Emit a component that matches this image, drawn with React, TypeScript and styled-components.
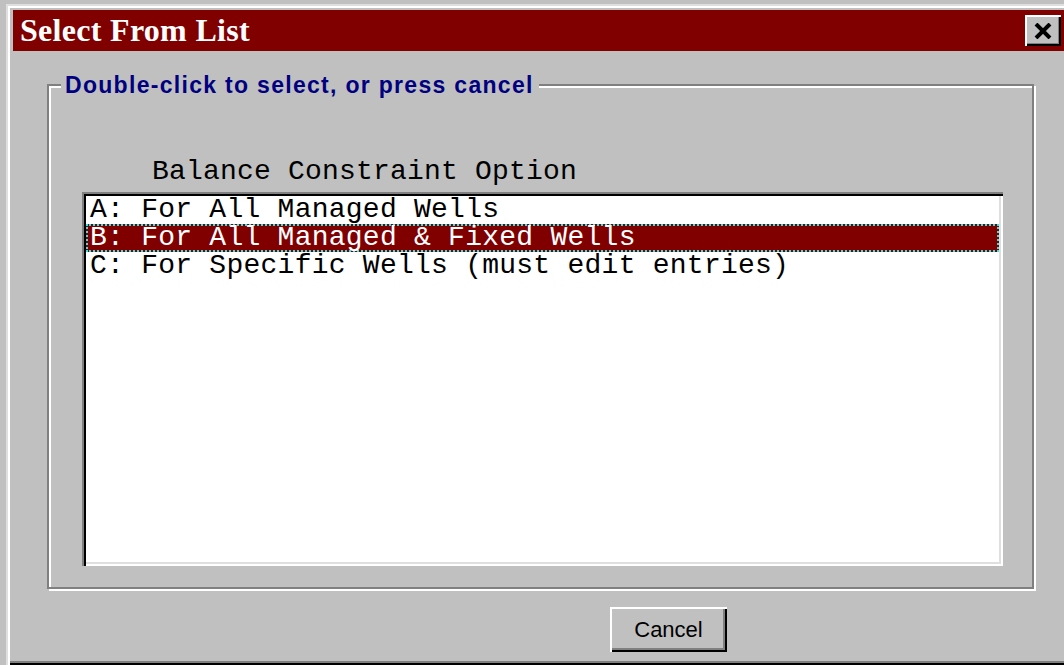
import React, { useState } from "react";
import styled, { createGlobalStyle } from "styled-components";

const GlobalStyle = createGlobalStyle`
  html, body {
    margin: 0;
    padding: 0;
    background: #c0c0c0;
    overflow: hidden;
  }
`;

const Window = styled.div`
  margin: 4px 0 0 6px;
  width: 1064px;
  height: 661px;
  box-sizing: border-box;
  padding: 6px 3px 3px 7px;
  background: #c0c0c0;
  box-shadow:
    inset 2px 2px 0 #dfdfdf,
    inset 4px 4px 0 #ffffff,
    inset -2px -2px 0 #000000,
    inset -4px -4px 0 #808080;
  display: flex;
  flex-direction: column;
`;

const TitleBar = styled.div`
  height: 41px;
  background: #800000;
  display: flex;
  align-items: center;
  justify-content: space-between;
  padding: 0 0 0 7px;
`;

const Title = styled.span`
  font-family: "Liberation Serif", "Times New Roman", serif;
  font-weight: bold;
  font-size: 32px;
  letter-spacing: 0.3px;
  color: #ffffff;
  line-height: 41px;
`;

const CloseButton = styled.button`
  width: 36px;
  height: 31px;
  margin: 0 6px 0 0;
  padding: 0;
  border: none;
  background: #c0c0c0;
  box-shadow:
    inset 2px 2px 0 #ffffff,
    inset -2px -2px 0 #000000,
    inset -3px -3px 0 #808080;
  display: flex;
  align-items: center;
  justify-content: center;
`;

const Group = styled.div`
  position: relative;
  margin: 33px 0 0 34px;
  width: 987px;
  height: 505px;
  box-sizing: border-box;
  border: 2px solid #808080;
  box-shadow: 2px 2px 0 #ffffff, inset 2px 2px 0 #ffffff;
  padding: 70px 29px 21px 33px;
  display: flex;
  flex-direction: column;
`;

const Legend = styled.span`
  position: absolute;
  top: -13px;
  left: 12px;
  padding: 0 5px 0 4px;
  background: #c0c0c0;
  font-family: "Liberation Sans", Arial, sans-serif;
  font-weight: bold;
  font-size: 23px;
  letter-spacing: 1.3px;
  line-height: 24px;
  color: #000080;
`;

const Caption = styled.div`
  font-family: "Liberation Mono", "Courier New", monospace;
  font-size: 28px;
  letter-spacing: 0.2px;
  line-height: 32px;
  color: #000000;
  margin: 0 0 4px 70px;
  white-space: pre;
`;

const ListBox = styled.div`
  flex: 1;
  background: #ffffff;
  box-sizing: border-box;
  padding: 4px;
  box-shadow:
    inset 2px 2px 0 #808080,
    inset 4px 4px 0 #000000,
    inset -2px -2px 0 #ffffff,
    inset -4px -4px 0 #dfdfdf;
`;

const Row = styled.div<{ $selected: boolean }>`
  height: 28px;
  box-sizing: border-box;
  padding-left: ${(p) => (p.$selected ? 2 : 4)}px;
  font-family: "Liberation Mono", "Courier New", monospace;
  font-size: 28px;
  letter-spacing: 0.25px;
  line-height: ${(p) => (p.$selected ? 24 : 28)}px;
  white-space: pre;
  color: ${(p) => (p.$selected ? "#ffffff" : "#000000")};
  background: ${(p) => (p.$selected ? "#800000" : "transparent")};
  border: ${(p) => (p.$selected ? "2px dotted #33e6e6" : "none")};
  cursor: default;
`;

const Footer = styled.div`
  display: flex;
  padding: 18px 0 0 597px;
`;

const Button = styled.button`
  width: 117px;
  height: 45px;
  padding: 0;
  border: none;
  background: #c0c0c0;
  font-family: "Liberation Sans", Arial, sans-serif;
  font-size: 22px;
  color: #000000;
  box-shadow:
    inset 2px 2px 0 #ffffff,
    inset -2px -2px 0 #000000,
    inset -4px -4px 0 #808080;
`;

const options = [
  "A: For All Managed Wells",
  "B: For All Managed & Fixed Wells",
  "C: For Specific Wells (must edit entries)",
];

export default function App() {
  const [selected, setSelected] = useState(1);

  return (
    <>
      <GlobalStyle />
      <Window>
        <TitleBar>
          <Title>Select From List</Title>
          <CloseButton aria-label="Close">
            <svg width="20" height="16" viewBox="0 0 20 16">
              <path d="M3 1 L17 15 M17 1 L3 15" stroke="#000" strokeWidth="4" />
            </svg>
          </CloseButton>
        </TitleBar>

        <Group>
          <Legend>Double-click to select, or press cancel</Legend>
          <Caption>Balance Constraint Option</Caption>
          <ListBox>
            {options.map((opt, i) => (
              <Row key={opt} $selected={i === selected} onClick={() => setSelected(i)}>
                {opt}
              </Row>
            ))}
          </ListBox>
        </Group>

        <Footer>
          <Button>Cancel</Button>
        </Footer>
      </Window>
    </>
  );
}
